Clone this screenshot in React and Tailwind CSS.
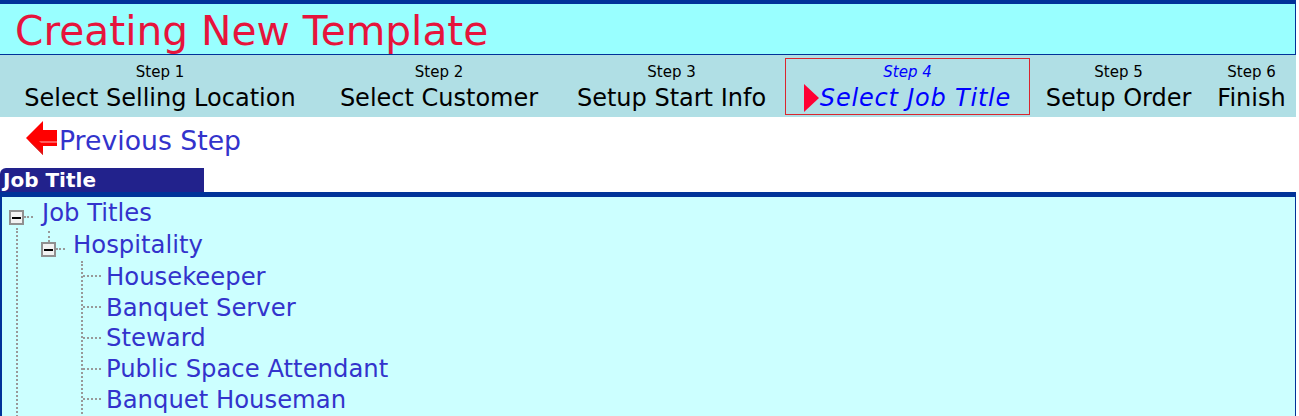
const steps = [
  { step: 'Step 1', name: 'Select Selling Location', width: 'w-[320px]' },
  { step: 'Step 2', name: 'Select Customer', width: 'w-[238px]' },
  { step: 'Step 3', name: 'Setup Start Info', width: 'w-[227px]' },
  { step: 'Step 4', name: 'Select Job Title', width: 'w-[245px]', active: true },
  { step: 'Step 5', name: 'Setup Order', width: 'w-[177px]' },
  { step: 'Step 6', name: 'Finish', width: 'w-[89px]' },
];

const titles = ['Housekeeper', 'Banquet Server', 'Steward', 'Public Space Attendant', 'Banquet Houseman'];

function Step({ step, name, width, active }) {
  if (active) {
    return (
      <div className="w-[245px] h-[57px] shrink-0 mt-[3px] border border-[#d9262e] flex flex-col items-center italic text-[#0000ff]">
        <div className="text-[15px] leading-[18px] mt-[4px]">{step}</div>
        <div className="flex items-center text-[24px] leading-[30px] mt-[2px] whitespace-nowrap tracking-[0.8px]">
          <span className="w-0 h-0 mr-[1px] border-y-[14px] border-y-transparent border-l-[15px] border-l-[#ff0033]" />
          {name}
        </div>
      </div>
    );
  }
  return (
    <div className={`${width} shrink-0 flex flex-col items-center text-black`}>
      <div className="text-[15px] leading-[18px] mt-[8px]">{step}</div>
      <div className="text-[24px] leading-[30px] mt-[2px] whitespace-nowrap">{name}</div>
    </div>
  );
}

function Minus() {
  return (
    <span className="w-[15px] h-[15px] mt-[10px] shrink-0 border-2 border-[#909090] bg-[#f2f2f2] flex items-center justify-center">
      <span className="w-[9px] h-[2px] bg-black" />
    </span>
  );
}

export default function App() {
  return (
    <div className="w-[1296px] h-[416px] overflow-hidden bg-white font-['DejaVu_Sans',sans-serif]">
      <div className="w-[258px] h-[6px] bg-[#003399] -mb-[6px]" />
      <div className="h-[55px] border-t-4 border-b border-r border-[#003399] bg-[#99ffff] pl-[15px] text-[40.7px] leading-[54px] text-[#e6143c] whitespace-nowrap">
        Creating New Template
      </div>
      <div className="h-[62px] bg-[#b0dfe5] flex">
        {steps.map((s) => (
          <Step key={s.step} {...s} />
        ))}
      </div>
      <div className="h-[51px] flex items-center pl-[25px] pb-[2px] text-[26.7px] text-[#3333cc]">
        <svg width="34" height="36" viewBox="0 0 34 36" className="-mt-[8px]">
          <path d="M1 18 L18 1 L18 10 L32 10 L32 26 L18 26 L18 35 Z" fill="#ff0000" />
          <path d="M14 21 L32 21 L32 23 L16 23 Z" fill="#ff5a5a" />
          <path d="M3 20 L18 35 L18 32 Z" fill="#d81818" />
        </svg>
        Previous Step
      </div>
      <div className="w-[204px] h-[24px] bg-[#22228c] rounded-tl-[6px] text-white font-bold text-[20px] leading-[24px] pl-[3px]">
        Job Title
      </div>
      <div className="h-[224px] border-t-[5px] border-l-2 border-r border-[#003399] bg-[#ccffff] text-[24.3px] leading-[31px] text-[#3333cc]">
        <div className="pl-[7px]">
          <div className="flex items-center h-[31px]">
            <Minus />
            <span className="w-[9px] mt-[9px] border-t-2 border-dotted border-[#999999] mr-[9px]" />
            Job Titles
          </div>
          <div className="border-l-2 border-dotted border-[#999999] ml-[7px] mt-[2px] pl-[23px]">
            <div className="relative flex items-center h-[33px] -mt-[2px]">
              <span className="absolute left-[7px] top-[3px] h-[11px] border-l-2 border-dotted border-[#999999]" />
              <Minus />
              <span className="w-[9px] mt-[9px] border-t-2 border-dotted border-[#999999] mr-[8px]" />
              Hospitality
            </div>
            <div className="border-l-2 border-dotted border-[#999999] ml-[40px] pb-[30px]">
              {titles.map((t) => (
                <div key={t} className="flex items-center h-[30.75px]">
                  <span className="w-[18px] border-t-2 border-dotted border-[#999999] mr-[5px]" />
                  {t}
                </div>
              ))}
            </div>
          </div>
        </div>
      </div>
    </div>
  );
}
